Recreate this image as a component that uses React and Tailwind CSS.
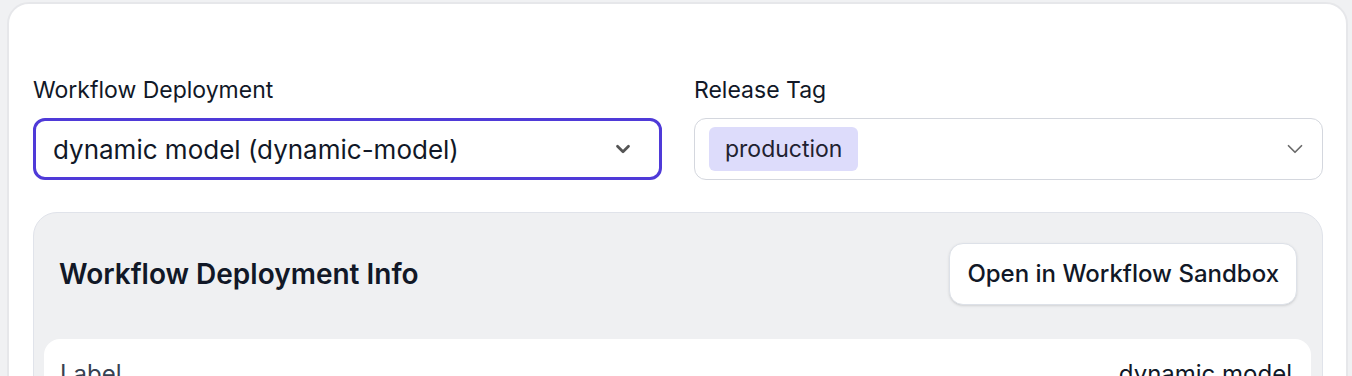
import React from "react";

// Chevron used by both selects
function Chevron({ thin }) {
    return (
        <svg
            width={thin ? 26 : 22}
            height={thin ? 26 : 22}
            viewBox="0 0 24 24"
            fill="none"
            stroke={thin ? "#6b6b6b" : "#555555"}
            strokeWidth={thin ? 1.6 : 3}
            strokeLinecap="round"
            strokeLinejoin="round"
        >
            <path d="M6 9l6 6 6-6" />
        </svg>
    );
}

export default function App() {
    return (
        <div
            className="w-full h-[376px] overflow-hidden bg-[#f0f1f3] pl-[7px] pr-[4px] pt-[2px]"
            style={{ fontFamily: "Inter, 'Noto Sans', sans-serif" }}
        >
            <div className="h-[420px] bg-white rounded-[22px] border-2 border-[#e6e7ea] pl-[24px] pr-[23px] pt-[71px]">
                {/* ================= Selects ================= */}
                <div className="grid grid-cols-2 gap-[32px]">
                    <div>
                        <label className="block text-[23px] leading-[30px] text-[#111827] mb-[13px]">
                            Workflow Deployment
                        </label>
                        <div className="h-[62px] rounded-[12px] border-[3px] border-[#4f3ad8] flex items-center justify-between pl-[17px] pr-[25px]">
                            <span className="text-[26px] text-[#111827]">dynamic model (dynamic-model)</span>
                            <Chevron />
                        </div>
                    </div>
                    <div>
                        <label className="block text-[23px] leading-[30px] text-[#111827] mb-[13px]">
                            Release Tag
                        </label>
                        <div className="h-[62px] rounded-[12px] border border-[#d4d7de] flex items-center justify-between pl-[14px] pr-[14px]">
                            <span className="h-[44px] px-[16px] rounded-[6px] bg-[#dddcfb] text-[23px] text-[#1f2230] flex items-center">
                                production
                            </span>
                            <Chevron thin />
                        </div>
                    </div>
                </div>

                {/* ================= Deployment info ================= */}
                <div className="mt-[32px] bg-[#eff0f2] border border-[#e0e3ea] rounded-[24px] pl-[10px] pr-[11px] pt-[30px]">
                    <div className="flex items-center justify-between pl-[15px] pr-[14px]">
                        <h2 className="text-[28px] font-semibold text-[#111827]">Workflow Deployment Info</h2>
                        <button className="h-[62px] px-[17px] bg-white border border-[#dde1e8] rounded-[14px] shadow-sm text-[24px] font-medium text-[#111827]">
                            Open in Workflow Sandbox
                        </button>
                    </div>
                    <div className="mt-[34px] bg-white rounded-t-[16px] h-[80px] flex justify-between px-[16px] pt-[17px] text-[24px] text-[#374151]">
                        <span>Label</span>
                        <span className="text-[#111827] pr-[3px]">dynamic model</span>
                    </div>
                </div>
            </div>
        </div>
    );
}
